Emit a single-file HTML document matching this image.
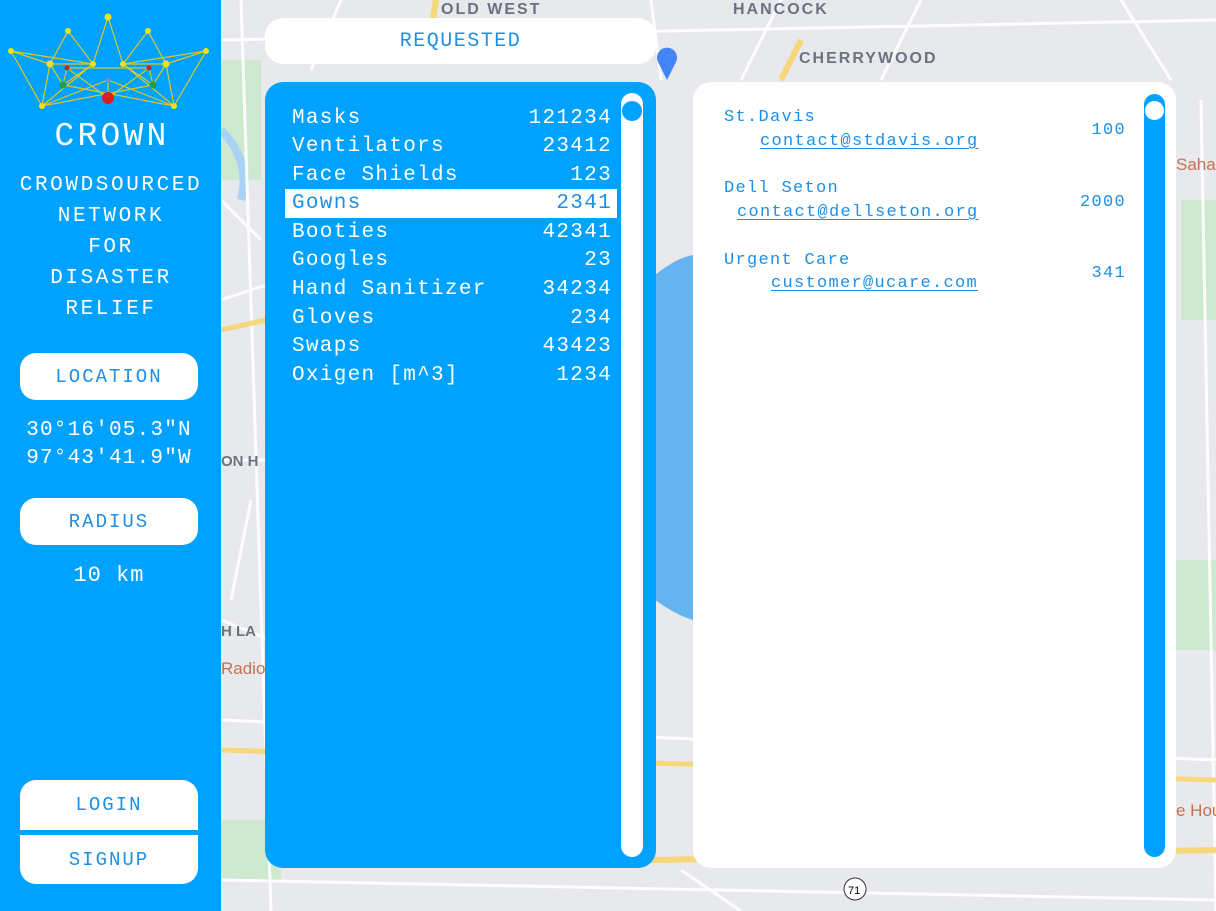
<!DOCTYPE html>
<html><head><meta charset="utf-8"><style>
*{margin:0;padding:0;box-sizing:border-box}
body{width:1216px;height:911px;overflow:hidden;position:relative;background:#e8e9ec;font-family:"Liberation Mono","DejaVu Sans Mono",monospace}
.abs{position:absolute}
#side{left:0;top:0;width:221px;height:911px;background:#00a2ff;color:#fff;text-align:center}
.btn{position:absolute;left:20px;width:178px;background:#fff;color:#1e8fe6;font-size:19px;letter-spacing:2px;display:flex;align-items:center;justify-content:center}
.row{position:absolute;left:285px;width:332px;height:29px;color:#fff;font-size:21px;letter-spacing:1.3px;display:flex;justify-content:space-between;padding:0 5px 0 7px;align-items:center}
.row.sel{background:#fff;color:#1e8fe6}
.ent{position:absolute;left:724px;color:#1e8fe6;font-size:17px;letter-spacing:1.3px}
.ent a{color:#1e8fe6;text-decoration:underline;text-underline-offset:3px}
.num{position:absolute;right:90px;color:#1e8fe6;font-size:17px;letter-spacing:1.3px}
</style></head><body>
<svg class="abs" style="left:221px;top:0" width="995" height="911">
<rect width="995" height="911" fill="#e8e9ec"/>
<g fill="#cfe8d0"><rect x="0" y="60" width="40" height="120"/><rect x="60" y="110" width="60" height="60"/><rect x="960" y="200" width="35" height="120"/><rect x="940" y="560" width="55" height="90"/><rect x="0" y="820" width="60" height="60"/></g>
<path d="M0 130 Q30 160 20 200" stroke="#a9d3f5" stroke-width="8" fill="none"/>
<g stroke="#fff" stroke-width="3" fill="none" opacity=".9">
<path d="M0 40 L995 20 M0 300 L60 280 M0 460 L50 460 M0 620 L50 640 M0 720 L995 760 M0 880 L995 900 M20 0 L50 911 M120 0 L90 70 M430 0 L440 80 M560 0 L520 80 M700 0 L660 80 M900 0 L950 80 M980 100 L995 911 M460 870 L520 911 M0 200 L40 240 M30 500 L10 600"/>
</g>
<path d="M0 750 L995 780" stroke="#f6d77a" stroke-width="5" fill="none"/>
<path d="M215 0 L205 60" stroke="#f6d77a" stroke-width="6" fill="none"/>
<path d="M580 40 L560 80" stroke="#f6d77a" stroke-width="6" fill="none"/>
<path d="M430 860 L995 850" stroke="#f6d77a" stroke-width="6" fill="none"/>
<path d="M0 330 L45 320" stroke="#f6d77a" stroke-width="5"/>
<path d="M434 275 Q455 258 472 255 L472 620 Q455 615 434 600 Z" fill="#45a6f0" opacity=".8"/>
<text x="220" y="14" font-family="Liberation Sans" font-weight="bold" font-size="16" fill="#6b7280" letter-spacing="2">OLD WEST</text>
<text x="512" y="14" font-family="Liberation Sans" font-weight="bold" font-size="16" fill="#6b7280" letter-spacing="2">HANCOCK</text>
<text x="578" y="63" font-family="Liberation Sans" font-weight="bold" font-size="16" fill="#6b7280" letter-spacing="2">CHERRYWOOD</text>
<text x="0" y="466" font-family="Liberation Sans" font-weight="bold" font-size="15" fill="#6b7280">ON H</text>
<text x="0" y="636" font-family="Liberation Sans" font-weight="bold" font-size="15" fill="#6b7280">H LA</text>
<text x="0" y="674" font-family="Liberation Sans" font-size="17" fill="#c5724f">Radio</text>
<text x="955" y="170" font-family="Liberation Sans" font-size="17" fill="#c5724f">Saha</text>
<text x="955" y="816" font-family="Liberation Sans" font-size="17" fill="#c5724f">e Hou</text>
<path d="M446 80 L437 62 A10 10 0 1 1 455 62 Z" fill="#4285f4"/>
<circle cx="634" cy="889" r="11" fill="#fff" stroke="#333"/>
<text x="627" y="894" font-family="Liberation Sans" font-size="11">71</text>
</svg>

<div id="side" class="abs">
<svg class="abs" style="left:0;top:0" width="221" height="115">
<g stroke="#d6c82a" stroke-width="1.2" fill="none">
<path d="M11 51 L50 64 L68 31 L93 64 L108 17 L123 64 L148 31 L166 64 L206 51 L174 106 L123 64 M11 51 L42 106 L50 64 M42 106 L93 64 M50 64 L93 64 M123 64 L166 64 M166 64 L174 106 M42 106 L108 80 L174 106 M67 68 L108 98 L149 68 M67 68 L63 85 L50 64 M149 68 L153 85 L166 64 M63 85 L93 64 M153 85 L123 64 M67 68 L149 68 M108 80 L108 98 M11 51 L93 64 M206 51 L123 64 M42 106 L153 85 M174 106 L63 85"/>
</g>
<g fill="#f1e21a"><circle cx="108" cy="17" r="3.5"/><circle cx="68" cy="31" r="3"/><circle cx="148" cy="31" r="3"/><circle cx="11" cy="51" r="3"/><circle cx="206" cy="51" r="3"/><circle cx="50" cy="64" r="3.5"/><circle cx="93" cy="64" r="3"/><circle cx="123" cy="64" r="3"/><circle cx="166" cy="64" r="3.5"/><circle cx="42" cy="106" r="3"/><circle cx="174" cy="106" r="3"/></g>
<circle cx="67" cy="68" r="2.5" fill="#c0241c"/><circle cx="149" cy="68" r="2.5" fill="#c0241c"/>
<circle cx="63" cy="85" r="3.5" fill="#21a04a"/><circle cx="153" cy="85" r="3.5" fill="#21a04a"/>
<circle cx="108" cy="80" r="2.5" fill="#8a7fd0"/><circle cx="108" cy="98" r="6" fill="#d9201e"/>
</svg>
<div class="abs" style="left:3px;width:218px;top:118px;font-size:33px;letter-spacing:3.2px">CROWN</div>
<div class="abs" style="left:2px;width:218px;top:170px;font-size:21px;line-height:31px;letter-spacing:2.6px">CROWDSOURCED<br>NETWORK<br>FOR<br>DISASTER<br>RELIEF</div>
<div class="btn" style="top:353px;height:47px;border-radius:16px">LOCATION</div>
<div class="abs" style="left:0;width:218px;top:417px;font-size:21px;line-height:28px;letter-spacing:1.2px">30°16'05.3"N<br>97°43'41.9"W</div>
<div class="btn" style="top:498px;height:47px;border-radius:16px">RADIUS</div>
<div class="abs" style="left:0;width:218px;top:563px;font-size:22px;letter-spacing:1px">10 km</div>
<div class="btn" style="top:780px;height:50px;border-radius:16px 16px 0 0">LOGIN</div>
<div class="btn" style="top:835px;height:49px;border-radius:0 0 16px 16px">SIGNUP</div>
</div>

<div class="abs" style="left:265px;top:18px;width:391px;height:46px;background:#fff;border-radius:18px;color:#1e8fe6;font-size:20px;letter-spacing:1.5px;display:flex;align-items:center;justify-content:center">REQUESTED</div>

<div class="abs" style="left:265px;top:82px;width:391px;height:786px;background:#00a2ff;border-radius:18px"></div>
<div class="abs" style="left:621px;top:93px;width:22px;height:764px;background:#fff;border-radius:11px"></div>
<div class="abs" style="left:622px;top:101px;width:20px;height:20px;background:#00a2ff;border-radius:50%"></div>
<div class="row" style="top:104px"><span>Masks</span><span>121234</span></div>
<div class="row" style="top:132px"><span>Ventilators</span><span>23412</span></div>
<div class="row" style="top:161px"><span>Face Shields</span><span>123</span></div>
<div class="row sel" style="top:189px"><span>Gowns</span><span>2341</span></div>
<div class="row" style="top:218px"><span>Booties</span><span>42341</span></div>
<div class="row" style="top:246px"><span>Googles</span><span>23</span></div>
<div class="row" style="top:275px"><span>Hand Sanitizer</span><span>34234</span></div>
<div class="row" style="top:304px"><span>Gloves</span><span>234</span></div>
<div class="row" style="top:332px"><span>Swaps</span><span>43423</span></div>
<div class="row" style="top:361px"><span>Oxigen [m^3]</span><span>1234</span></div>

<div class="abs" style="left:693px;top:82px;width:483px;height:786px;background:#fff;border-radius:18px"></div>
<div class="abs" style="left:1144px;top:94px;width:21px;height:763px;background:#00a2ff;border-radius:11px"></div>
<div class="abs" style="left:1145px;top:101px;width:19px;height:19px;background:#fff;border-radius:50%"></div>
<div class="ent" style="top:108px">St.Davis</div>
<div class="ent" style="top:132px;left:760px"><a>contact@stdavis.org</a></div>
<div class="num" style="top:121px">100</div>
<div class="ent" style="top:179px">Dell Seton</div>
<div class="ent" style="top:203px;left:737px"><a>contact@dellseton.org</a></div>
<div class="num" style="top:193px">2000</div>
<div class="ent" style="top:251px">Urgent Care</div>
<div class="ent" style="top:274px;left:771px"><a>customer@ucare.com</a></div>
<div class="num" style="top:264px">341</div>
</body></html>
